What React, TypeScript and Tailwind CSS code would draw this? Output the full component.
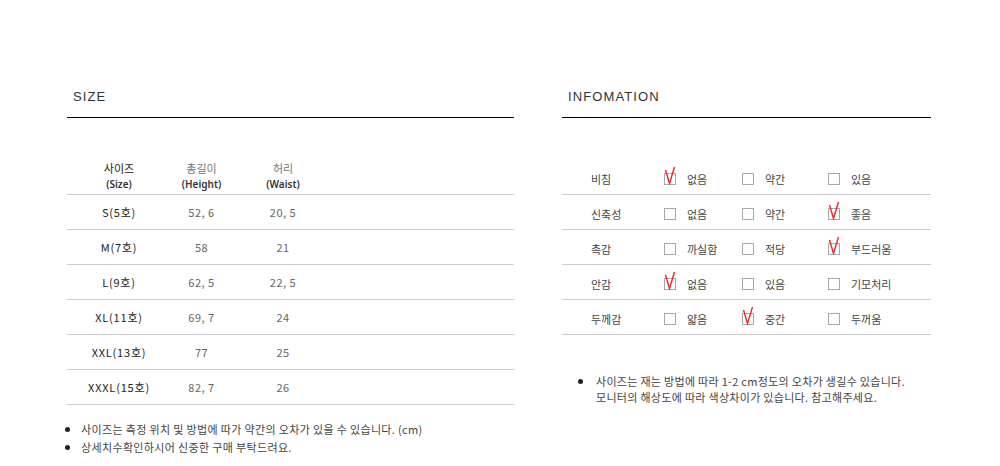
const font = { fontFamily: '"Noto Sans CJK KR", "Noto Sans", sans-serif' }

const sizeRows = [
  { size: 'S(5호)', height: '52, 6', waist: '20, 5' },
  { size: 'M(7호)', height: '58', waist: '21' },
  { size: 'L(9호)', height: '62, 5', waist: '22, 5' },
  { size: 'XL(11호)', height: '69, 7', waist: '24' },
  { size: 'XXL(13호)', height: '77', waist: '25' },
  { size: 'XXXL(15호)', height: '82, 7', waist: '26' },
]

const infoRows = [
  { label: '비침', options: ['없음', '약간', '있음'], checked: 0 },
  { label: '신축성', options: ['없음', '약간', '좋음'], checked: 2 },
  { label: '촉감', options: ['까실함', '적당', '부드러움'], checked: 2 },
  { label: '안감', options: ['없음', '있음', '기모처리'], checked: 0 },
  { label: '두께감', options: ['얇음', '중간', '두꺼움'], checked: 1 },
]

const optionWidths = ['w-[78px]', 'w-[86px]', 'w-[90px]']

const latin = { fontFamily: '"Noto Sans", "Liberation Sans", sans-serif' }

function SectionTitle({ children }: { children: string }) {
  return (
    <h2
      className="h-[31px] border-b border-black pl-[6px] text-[13px] leading-[20px] tracking-[1.1px] text-[#333]"
      style={{ fontFamily: '"Liberation Sans", Arial, sans-serif' }}
    >
      {children}
    </h2>
  )
}

function Checkbox({ checked }: { checked: boolean }) {
  return (
    <span className="relative inline-block w-[12px] h-[12px] border border-[#a8a8a8] shrink-0">
      {checked && (
        <svg className="absolute left-[-1px] top-[-8px]" width="12" height="19" viewBox="0 0 12 19">
          <polyline points="1.5,4 5.5,17.5 10.5,1" fill="none" stroke="#f0242c" strokeWidth="1.4" />
        </svg>
      )}
    </span>
  )
}

export default function App() {
  return (
    <div className="min-h-[466px] bg-white flex" style={font}>
      {/* SIZE */}
      <section className="ml-[67px] w-[447px] pt-[87px]">
        <SectionTitle>SIZE</SectionTitle>

        <div className="mt-[42px] h-[35px] border-b border-[#cccccc] flex">
          <div className="w-[104px] text-center">
            <div className="text-[11px] leading-[16px] text-[#222]">사이즈</div>
            <div className="text-[10px] leading-[16px] font-semibold text-[#333]" style={latin}>(Size)</div>
          </div>
          <div className="w-[61px] text-center">
            <div className="text-[11px] leading-[16px] text-[#777]">총길이</div>
            <div className="text-[10px] leading-[16px] font-semibold text-[#333]" style={latin}>(Height)</div>
          </div>
          <div className="w-[102px] text-center">
            <div className="text-[11px] leading-[16px] text-[#777]">허리</div>
            <div className="text-[10px] leading-[16px] font-semibold text-[#333]" style={latin}>(Waist)</div>
          </div>
        </div>

        {sizeRows.map((row) => (
          <div key={row.size} className="h-[35px] border-b border-[#cccccc] flex items-center pt-[1px] text-[11px]">
            <div className="w-[104px] text-center text-[#222] tracking-[0.8px]">{row.size}</div>
            <div className="w-[61px] text-center text-[#666] tracking-[0.5px]">{row.height}</div>
            <div className="w-[102px] text-center text-[#666] tracking-[0.5px]">{row.waist}</div>
          </div>
        ))}

        <ul className="mt-[15px] text-[11px] leading-[18px] text-[#444] tracking-[0.35px]">
          <li className="flex items-center">
            <span className="w-[5px] h-[5px] rounded-full bg-[#222] ml-[-2px] mr-[11px]" />
            사이즈는 측정 위치 및 방법에 따가 약간의 오차가 있을 수 있습니다. (cm)
          </li>
          <li className="flex items-center">
            <span className="w-[5px] h-[5px] rounded-full bg-[#222] ml-[-2px] mr-[11px]" />
            상세치수확인하시어 신중한 구매 부탁드려요.
          </li>
        </ul>
      </section>

      {/* INFOMATION */}
      <section className="ml-[48px] w-[369px] pt-[87px]">
        <SectionTitle>INFOMATION</SectionTitle>

        <div className="mt-[42px]">
          {infoRows.map((row) => (
            <div key={row.label} className="h-[35px] border-b border-[#cccccc] flex items-center pt-[4px] text-[11px] text-[#444]">
              <div className="pl-[29px] w-[102px]">{row.label}</div>
              {row.options.map((opt, i) => (
                <div key={opt} className={`${optionWidths[i]} flex items-center`}>
                  <Checkbox checked={row.checked === i} />
                  <span className="ml-[11px]">{opt}</span>
                </div>
              ))}
            </div>
          ))}
        </div>

        <div className="mt-[38px] flex text-[11px] leading-[16px] text-[#444] tracking-[0.3px]">
          <span className="w-[5px] h-[5px] rounded-full bg-[#222] ml-[16px] mt-[6px] shrink-0" />
          <p className="ml-[13px]">
            사이즈는 재는 방법에 따라 1-2 cm정도의 오차가 생길수 있습니다.
            <br />
            모니터의 해상도에 따라 색상차이가 있습니다. 참고해주세요.
          </p>
        </div>
      </section>
    </div>
  )
}
